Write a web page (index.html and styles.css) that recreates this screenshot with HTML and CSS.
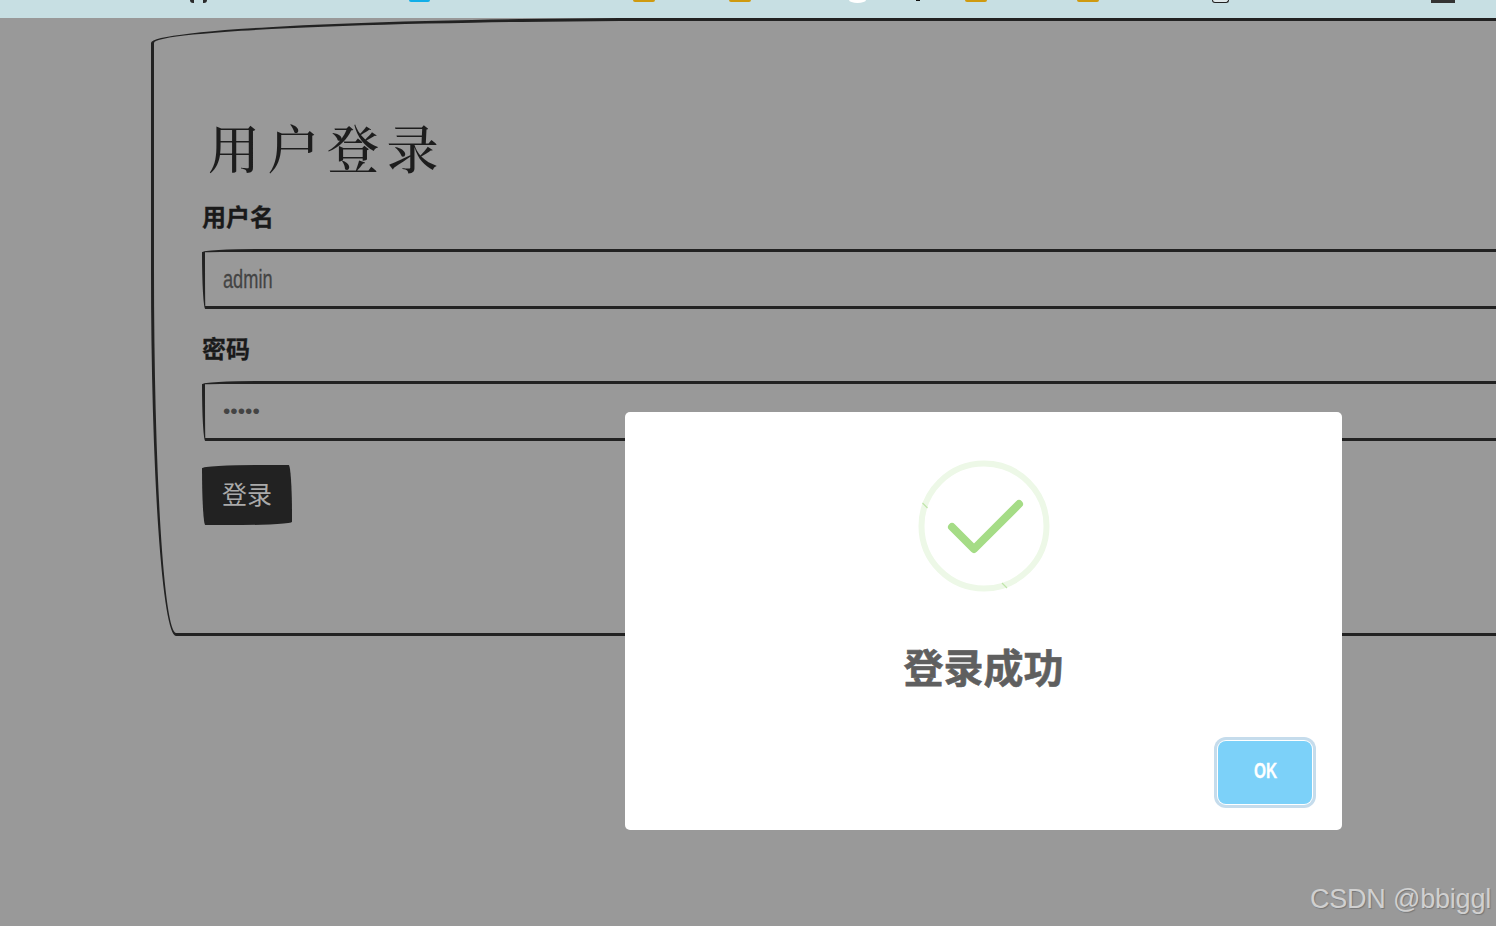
FILE: index.html
```html
<!DOCTYPE html>
<html lang="zh-CN">
<head>
<meta charset="UTF-8">
<title>用户登录</title>
<link rel="stylesheet" href="styles.css">
</head>
<body>

<!-- Top nav, only the bottom edge of its icons is in view -->
<nav class="topbar">
    <span class="nav-icon icon-code"></span>
    <span class="nav-icon icon-blue"></span>
    <span class="nav-icon icon-amber icon-a1"></span>
    <span class="nav-icon icon-amber icon-a2"></span>
    <span class="nav-icon icon-round"></span>
    <span class="nav-icon icon-tick"></span>
    <span class="nav-icon icon-amber icon-a3"></span>
    <span class="nav-icon icon-amber icon-a4"></span>
    <span class="nav-icon icon-box"></span>
    <span class="nav-icon icon-dark"></span>
</nav>

<main class="stage">
    <section class="card">
        <h1 class="card-title">用户登录</h1>
        <form class="login-form">
            <label class="field-label">用户名</label>
            <div class="field-input"><span class="narrow field-value">admin</span></div>
            <label class="field-label" for="password">密码</label>
            <input class="field-input" id="password" type="password" value="12345">
            <button class="login-btn" type="button">登录</button>
        </form>
    </section>
</main>

<!-- Success dialog -->
<div class="modal" role="dialog">
    <svg class="modal-icon" width="140" height="140" viewBox="0 0 140 140">
        <circle cx="70" cy="70" r="62.5" fill="none" stroke="#edf8e7" stroke-width="6"/>
        <line x1="8.5" y1="47" x2="13.5" y2="52" stroke="#c0e5ab" stroke-width="1.2"/>
        <line x1="88" y1="127" x2="93" y2="132" stroke="#c0e5ab" stroke-width="1.2"/>
        <polyline points="38,71 60,93 105,48" fill="none" stroke="#a5dc86" stroke-width="8" stroke-linecap="round" stroke-linejoin="round"/>
    </svg>
    <h2 class="modal-title">登录成功</h2>
    <div class="modal-actions">
        <button class="ok-btn" type="button"><span class="narrow">OK</span></button>
    </div>
</div>

<div class="watermark">CSDN @bbiggl</div>

</body>
</html>
```

FILE: styles.css
```css
body {
    margin: 0;
    width: 1496px;
    height: 926px;
    overflow: hidden;
    position: relative;
    background: #999;
    font-family: "Liberation Sans", "Noto Sans CJK SC", sans-serif;
}

/* Top bar */
.topbar {
    height: 18px;
    background: #c7dfe3;
    display: flex;
    align-items: flex-start;
}

.nav-icon { display: block; flex: none; }
.icon-code {
    width: 17px;
    height: 3px;
    margin-left: 190px;
    border-left: 4px solid #2b2b2b;
    border-right: 4px solid #2b2b2b;
    box-sizing: border-box;
    border-radius: 0 0 8px 8px;
}
.icon-blue { width: 21px; height: 2px; margin-left: 202px; background: #11aee8; border-radius: 0 0 3px 3px; }
.icon-amber { width: 22px; height: 2px; background: #cf9a10; border-radius: 0 0 2px 2px; }
.icon-a1 { margin-left: 203px; }
.icon-a2 { margin-left: 74px; }
.icon-round { width: 17px; height: 3px; margin-left: 98px; background: #fff; border-radius: 0 0 50% 50% / 0 0 100% 100%; }
.icon-tick { width: 4px; height: 1px; margin-left: 50px; background: #111; }
.icon-a3 { margin-left: 45px; }
.icon-a4 { margin-left: 90px; }
.icon-box {
    width: 17px;
    height: 3px;
    margin-left: 113px;
    box-sizing: border-box;
    border: 1px solid #222;
    border-top: none;
    border-radius: 0 0 4px 4px;
    background: #dfe8ea;
}
.icon-dark { width: 24px; height: 3px; margin-left: 202px; background: #333; }

/* Login card, runs off the right side of the window */
.stage { padding-left: 151px; }

.card {
    width: 1800px;
    height: 618px;
    box-sizing: border-box;
    padding: 93px 48px 0;
    border: 3px solid #222;
    border-radius: 520px 25px 225px 25px / 25px 225px 25px 365px;
}

.card-title {
    margin: 0 0 24px 6px;
    font-family: "Noto Serif CJK SC", "Noto Sans CJK SC", serif;
    font-size: 52px;
    line-height: 66px;
    font-weight: 500;
    letter-spacing: 7.5px;
    color: #1d1d1d;
}

.login-form {
    display: flex;
    flex-direction: column;
    align-items: flex-start;
}

.field-label {
    font-size: 24px;
    line-height: 28px;
    font-weight: bold;
    color: #1a1a1a;
    margin-bottom: 17px;
    -webkit-text-stroke: 0.3px #1a1a1a;
}

.field-input {
    width: 100%;
    height: 60px;
    box-sizing: border-box;
    display: flex;
    align-items: center;
    margin-bottom: 27px;
    padding: 0 18px;
    background: transparent;
    border: 3px solid #222;
    border-radius: 255px 15px 225px 15px / 15px 225px 15px 255px;
    font-size: 21px;
    color: #444;
    outline: none;
}

/* no condensed face installed, squeeze the regular one */
.narrow {
    display: inline-block;
    transform: scaleX(0.7);
    -webkit-text-stroke: 0.3px currentColor;
}

.field-value {
    font-size: 26px;
    transform-origin: left center;
}

.login-btn {
    width: 90px;
    height: 60px;
    margin-top: -3px;
    padding: 0 0 5px;
    background: #222;
    border: none;
    border-radius: 255px 15px 225px 15px / 15px 225px 15px 255px;
    font-family: inherit;
    font-size: 25px;
    color: #aaa;
}

/* Dialog */
.modal {
    position: absolute;
    left: 625px;
    top: 412px;
    width: 717px;
    height: 418px;
    background: #fff;
    border-radius: 5px;
    display: flex;
    flex-direction: column;
    align-items: center;
}

.modal-icon { margin-top: 44px; }

.modal-title {
    margin: 43px 0 0;
    font-size: 40px;
    line-height: 60px;
    font-weight: bold;
    color: #5f5f5f;
    -webkit-text-stroke: 0.6px #5f5f5f;
}

.modal-actions {
    align-self: stretch;
    display: flex;
    justify-content: flex-end;
    padding: 42px 30px 0 0;
}

.ok-btn {
    width: 94px;
    height: 63px;
    padding: 0 0 3px;
    background: #7cd1f9;
    border: none;
    border-radius: 8px;
    box-shadow: 0 0 0 1px #fff, 0 0 0 4px #c5dcec;
    font-family: inherit;
    font-size: 22px;
    font-weight: bold;
    color: #fff;
}

.watermark {
    position: absolute;
    right: 5px;
    top: 882px;
    font-size: 27px;
    line-height: 34px;
    letter-spacing: -0.2px;
    color: #d0d0d0;
    text-shadow: 1px 1px 1px #777;
}
```
